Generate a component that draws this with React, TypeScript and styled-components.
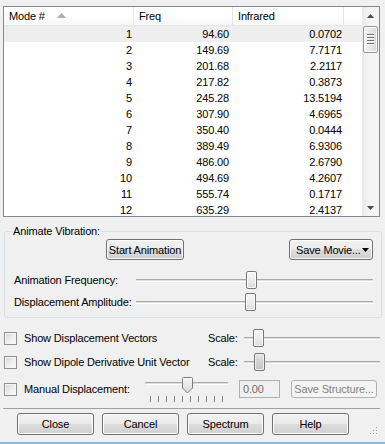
import React from 'react'
import styled, { createGlobalStyle, css } from 'styled-components'

const GlobalStyle = createGlobalStyle`
  html, body {
    margin: 0;
    padding: 0;
    background: #f0f0f0;
  }
  body {
    font-family: "Liberation Sans", Arial, sans-serif;
    font-size: 11px;
    letter-spacing: -0.15px;
    color: #000;
  }
`

const modes: [number, string, string][] = [
  [1, '94.60', '0.0702'],
  [2, '149.69', '7.7171'],
  [3, '201.68', '2.2117'],
  [4, '217.82', '0.3873'],
  [5, '245.28', '13.5194'],
  [6, '307.90', '4.6965'],
  [7, '350.40', '0.0444'],
  [8, '389.49', '6.9306'],
  [9, '486.00', '2.6790'],
  [10, '494.69', '4.2607'],
  [11, '555.74', '0.1717'],
  [12, '635.29', '2.4137']
]

const Slider: React.FC<{ value: number, pressed?: boolean }> = ({ value, pressed }) => (
  <SliderBox>
    <Groove />
    <Thumb $pressed={pressed} style={{ left: `calc(${value * 100}% - 5px)` }} />
  </SliderBox>
)

const TickSlider: React.FC<{ value: number, ticks: number }> = ({ value, ticks }) => (
  <TickSliderBox>
    <TickTrack>
      <Groove />
      <PointerThumb style={{ left: `calc(${value * 100}% - 5px)` }} width="11" height="17" viewBox="0 0 11 17">
        <defs>
          <linearGradient id="pt" x1="0" y1="0" x2="0" y2="1">
            <stop offset="0" stopColor="#f7f7f7" />
            <stop offset="1" stopColor="#d9d9d9" />
          </linearGradient>
        </defs>
        <path d="M0.5 1.5 Q0.5 0.5 1.5 0.5 H9.5 Q10.5 0.5 10.5 1.5 V11 L5.5 16 L0.5 11 Z" fill="url(#pt)" stroke="#7a7a7a" />
      </PointerThumb>
    </TickTrack>
    <Ticks>
      {Array.from({ length: ticks }).map((_, i) => <Tick key={i} />)}
    </Ticks>
  </TickSliderBox>
)

const App: React.FC = () => (
  <Window>
    <GlobalStyle />
    <ListBox>
      <Table>
        <HeaderRow>
          <HeaderCell>Mode #<SortArrow width="9" height="5" viewBox="0 0 9 5"><path d="M0 5 L4.5 0 L9 5 Z" fill="#a8aeb5" /></SortArrow></HeaderCell>
          <HeaderCell>Freq</HeaderCell>
          <HeaderCell>Infrared</HeaderCell>
          <HeaderCell />
        </HeaderRow>
        {modes.map(([n, f, ir]) => (
          <Row key={n} $selected={n === 1}>
            <Cell $pr={2}>{n}</Cell>
            <Cell $pr={4}>{f}</Cell>
            <Cell $pr={2}>{ir}</Cell>
            <Cell $pr={0} />
          </Row>
        ))}
      </Table>
      <ScrollBar>
        <ScrollArrow>
          <svg width="7" height="4" viewBox="0 0 7 4"><path d="M0 4 L3.5 0 L7 4 Z" fill="#4a4a4a" /></svg>
        </ScrollArrow>
        <ScrollTrack>
          <ScrollThumb>
            <GripLines>
              <span /><span /><span /><span />
            </GripLines>
          </ScrollThumb>
        </ScrollTrack>
        <ScrollArrow>
          <svg width="7" height="4" viewBox="0 0 7 4"><path d="M0 0 L3.5 4 L7 0 Z" fill="#4a4a4a" /></svg>
        </ScrollArrow>
      </ScrollBar>
    </ListBox>

    <Group>
      <Legend>Animate Vibration:</Legend>
      <GroupButtons>
        <StartButton>Start Animation</StartButton>
        <MovieButton>
          <span>Save Movie...</span>
          <svg width="7" height="4" viewBox="0 0 7 4"><path d="M0 0 L3.5 4 L7 0 Z" fill="#000" /></svg>
        </MovieButton>
      </GroupButtons>
      <SliderRow>
        <Label>Animation Frequency:</Label>
        <Slider value={0.485} />
      </SliderRow>
      <SliderRow>
        <Label>Displacement Amplitude:</Label>
        <Slider value={0.481} />
      </SliderRow>
    </Group>

    <Options>
      <OptionRow>
        <Checkbox />
        <OptionLabel $width={184}>Show Displacement Vectors</OptionLabel>
        <ScaleLabel>Scale:</ScaleLabel>
        <ScaleSlot><Slider value={0.103} /></ScaleSlot>
      </OptionRow>
      <OptionRow>
        <Checkbox />
        <OptionLabel $width={184}>Show Dipole Derivative Unit Vector</OptionLabel>
        <ScaleLabel>Scale:</ScaleLabel>
        <ScaleSlot><Slider value={0.107} pressed /></ScaleSlot>
      </OptionRow>
      <OptionRow $tall>
        <Checkbox />
        <OptionLabel $width={121}>Manual Displacement:</OptionLabel>
        <TickSlider value={0.506} ticks={10} />
        <ValueBox>0.00</ValueBox>
        <DisabledButton>Save Structure...</DisabledButton>
      </OptionRow>
    </Options>

    <Separator />

    <Footer>
      <Button>Close</Button>
      <Button>Cancel</Button>
      <Button>Spectrum</Button>
      <Button>Help</Button>
    </Footer>

    <Gripper width="8" height="8" viewBox="0 0 8 8">
      {[[6, 0], [3, 3], [6, 3], [0, 6], [3, 6], [6, 6]].map(([x, y]) => (
        <g key={`${x}-${y}`}>
          <rect x={x + 1} y={y + 1} width="1" height="1" fill="#fff" />
          <rect x={x} y={y} width="1" height="1" fill="#a0a0a0" />
        </g>
      ))}
    </Gripper>
  </Window>
)

export default App

const Window = styled.div`
  position: relative;
  width: 385px;
  height: 444px;
  box-sizing: border-box;
  background: #f0f0f0;
  border-bottom: 2px solid #7fbbe3;
  display: flex;
  flex-direction: column;
  overflow: hidden;
`

/* list */
const ListBox = styled.div`
  margin: 6px 0 0 3px;
  width: 377px;
  height: 211px;
  box-sizing: border-box;
  border: 1px solid #828790;
  background: #fff;
  display: grid;
  grid-template-columns: 358px 17px;
  overflow: hidden;
`
const Table = styled.div`
  overflow: hidden;
`
const columns = css`
  display: grid;
  grid-template-columns: 130px 99px 111px 18px;
`
const HeaderRow = styled.div`
  ${columns}
  height: 19px;
  box-sizing: border-box;
  border-bottom: 1px solid #e5e5e5;
  background: linear-gradient(#ffffff, #ffffff 45%, #f6f7f9);
`
const HeaderCell = styled.div`
  display: flex;
  align-items: center;
  padding-left: 5px;
  border-right: 1px solid #e3e5e8;
  &:last-child {
    border-right: none;
  }
`
const SortArrow = styled.svg`
  margin-left: 12px;
  margin-top: -2px;
`
const Row = styled.div<{ $selected?: boolean }>`
  ${columns}
  height: 16px;
  line-height: 16px;
  background: ${p => p.$selected ? '#eeeeee' : '#ffffff'};
`
const Cell = styled.div<{ $pr: number }>`
  text-align: right;
  padding-right: ${p => p.$pr}px;
  white-space: nowrap;
`
const ScrollBar = styled.div`
  display: grid;
  grid-template-rows: 17px 1fr 17px;
  background: linear-gradient(90deg, #e9e9e9, #f4f4f4 40%, #f4f4f4);
`
const ScrollArrow = styled.div`
  display: flex;
  align-items: center;
  justify-content: center;
`
const ScrollTrack = styled.div`
  padding: 2px 1px 0 1px;
`
const ScrollThumb = styled.div`
  height: 27px;
  box-sizing: border-box;
  border: 1px solid #979797;
  border-radius: 2px;
  background: linear-gradient(90deg, #f3f3f3, #e8e8e8 50%, #d8d8d8);
  box-shadow: inset 0 0 0 1px #fbfbfb;
  display: flex;
  align-items: center;
  justify-content: center;
`
const GripLines = styled.div`
  display: flex;
  flex-direction: column;
  gap: 1px;
  span {
    display: block;
    width: 7px;
    height: 1px;
    background: #6f6f6f;
    border-bottom: 1px solid #fff;
  }
`

/* group box */
const Group = styled.fieldset`
  margin: 8px 0 0 4px;
  width: 378px;
  box-sizing: border-box;
  border: 1px solid #d5dfe5;
  border-radius: 3px;
  padding: 0 8px 4px 9px;
  min-width: 0;
`
const Legend = styled.legend`
  padding: 0 1px;
  margin-left: -2px;
  line-height: 13px;
`
const GroupButtons = styled.div`
  display: flex;
  margin: 1px 0 9px;
`
const buttonStyle = css`
  height: 21px;
  box-sizing: border-box;
  border: 1px solid #707070;
  border-radius: 3px;
  background: linear-gradient(#f2f2f2 0%, #ebebeb 48%, #dddddd 52%, #cfcfcf 100%);
  box-shadow: inset 0 0 0 1px #fcfcfc;
  font: inherit;
  color: #000;
  padding: 0;
  display: flex;
  align-items: center;
  justify-content: center;
  white-space: nowrap;
`
const StartButton = styled.div`
  ${buttonStyle}
  width: 78px;
  margin-left: 92px;
`
const MovieButton = styled.div`
  ${buttonStyle}
  width: 84px;
  margin-left: auto;
  justify-content: space-between;
  padding: 0 3px 0 6px;
  svg {
    margin-top: 1px;
    flex: none;
  }
`
const SliderRow = styled.div`
  display: grid;
  grid-template-columns: 122px 1fr;
  align-items: center;
  height: 22px;
`
const Label = styled.div`
  white-space: nowrap;
`

/* slider */
const SliderBox = styled.div`
  position: relative;
  height: 18px;
  display: flex;
  align-items: center;
`
const Groove = styled.div`
  flex: 1;
  height: 3px;
  box-sizing: border-box;
  border-top: 1px solid #a9a9a9;
  border-bottom: 1px solid #ffffff;
  background: #dedede;
`
const Thumb = styled.div<{ $pressed?: boolean }>`
  position: absolute;
  top: 0;
  width: 11px;
  height: 18px;
  box-sizing: border-box;
  border: 1px solid #767676;
  border-radius: 2px;
  background: ${p => p.$pressed
    ? 'linear-gradient(#e6e6e6, #d2d2d2 50%, #c4c4c4)'
    : 'linear-gradient(#f8f8f8, #ececec 50%, #dcdcdc)'};
  box-shadow: inset 0 0 0 1px ${p => p.$pressed ? '#ededed' : '#ffffff'};
`
const TickSliderBox = styled.div`
  width: 83px;
  display: flex;
  flex-direction: column;
`
const TickTrack = styled.div`
  position: relative;
  height: 17px;
  display: flex;
  align-items: flex-start;
  padding-top: 5px;
  box-sizing: border-box;
`
const PointerThumb = styled.svg`
  position: absolute;
  top: 0;
`
const Ticks = styled.div`
  display: flex;
  justify-content: space-between;
  margin-top: 2px;
  padding: 0 5px;
  height: 6px;
`
const Tick = styled.span`
  width: 1px;
  height: 6px;
  background: #7f7f7f;
`

/* options */
const Options = styled.div`
  display: flex;
  flex-direction: column;
  margin-top: 8px;
  padding-left: 4px;
`
const OptionRow = styled.div<{ $tall?: boolean }>`
  display: flex;
  align-items: center;
  height: ${p => p.$tall ? 26 : 24}px;
  margin-top: ${p => p.$tall ? 2 : 0}px;
`
const Checkbox = styled.div`
  width: 13px;
  height: 13px;
  box-sizing: border-box;
  border: 1px solid #8e8f8f;
  background: linear-gradient(135deg, #d6d6d6, #f0f0f0 60%, #fbfbfb);
  box-shadow: inset 0 0 0 1px #f4f4f4;
  margin-right: 7px;
  flex: none;
`
const OptionLabel = styled.div<{ $width: number }>`
  width: ${p => p.$width}px;
  white-space: nowrap;
`
const ScaleLabel = styled.div`
  width: 36px;
`
const ScaleSlot = styled.div`
  width: 136px;
`
const ValueBox = styled.div`
  width: 41px;
  height: 18px;
  margin-left: 11px;
  box-sizing: border-box;
  border: 1px solid #afafaf;
  color: #6d6d6d;
  padding-left: 3px;
  line-height: 16px;
`
const DisabledButton = styled.div`
  width: 86px;
  height: 18px;
  margin-left: 11px;
  box-sizing: border-box;
  border: 1px solid #adb2b5;
  border-radius: 3px;
  background: #f4f4f4;
  color: #838383;
  display: flex;
  align-items: center;
  justify-content: center;
  white-space: nowrap;
`

/* footer */
const Separator = styled.div`
  margin: 6px 5px 0 3px;
  height: 1px;
  background: #a0a0a0;
`
const Footer = styled.div`
  display: flex;
  gap: 8px;
  padding-left: 17px;
  margin-top: 4px;
`
const Button = styled.div`
  ${buttonStyle}
  width: 77px;
  height: 22px;
`
const Gripper = styled.svg`
  position: absolute;
  right: 7px;
  bottom: 7px;
`
